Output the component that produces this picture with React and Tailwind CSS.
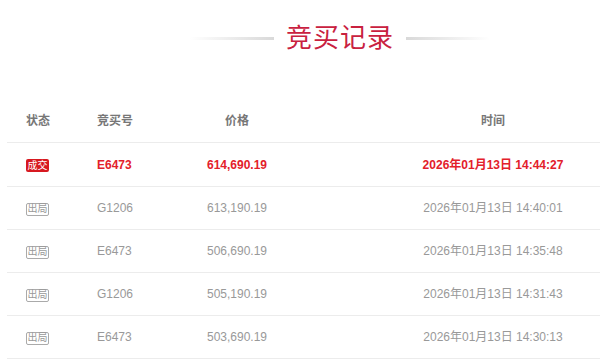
import React from "react";

const rows = [
  { status: "成交", code: "E6473", price: "614,690.19", time: "2026年01月13日 14:44:27", win: true },
  { status: "出局", code: "G1206", price: "613,190.19", time: "2026年01月13日 14:40:01" },
  { status: "出局", code: "E6473", price: "506,690.19", time: "2026年01月13日 14:35:48" },
  { status: "出局", code: "G1206", price: "505,190.19", time: "2026年01月13日 14:31:43" },
  { status: "出局", code: "E6473", price: "503,690.19", time: "2026年01月13日 14:30:13" },
];

const font = { fontFamily: '"Liberation Sans", Arial, "Noto Sans CJK SC", sans-serif' };

export default function App() {
  return (
    <div className="w-[600px] h-[359px] overflow-hidden bg-white" style={font}>
      <div className="flex items-center justify-center h-[76px] gap-3 pl-[80px]">
        <div className="w-[84px] h-[3px] bg-gradient-to-r from-white to-[#d9d9d9]" />
        <h1 className="text-[26px] leading-none text-[#c9213f] tracking-[1px]">竞买记录</h1>
        <div className="w-[84px] h-[3px] bg-gradient-to-r from-[#d9d9d9] to-white" />
      </div>

      <div className="ml-[7px] mt-[24px]">
        <div className="grid grid-cols-[83px_80px_134px_1fr] items-center h-[43px] border-b border-[#ececec] text-[12px] font-bold text-[#777]">
          <div className="pl-[19px]">状态</div>
          <div className="pl-[7px]">竞买号</div>
          <div className="text-center">价格</div>
          <div className="text-center pl-[82px]">时间</div>
        </div>
        {rows.map((r, i) => (
          <div
            key={i}
            className={
              "grid grid-cols-[83px_80px_134px_1fr] items-center border-b border-[#ececec] text-[12px] " +
              (i === 0 ? "h-[44px] " : "h-[43px] ") +
              (r.win ? "font-bold text-[#e3202a]" : "text-[#999]")
            }
          >
            <div className="pl-[19px]">
              {r.win ? (
                <span className="inline-flex items-center justify-center w-[23px] h-[13px] rounded-[2px] bg-[#d71920] text-white text-[10px] font-normal leading-none">
                  {r.status}
                </span>
              ) : (
                <span className="inline-flex items-center justify-center w-[23px] h-[13px] rounded-[2px] border border-[#aaa] text-[#999] text-[10px] leading-none">
                  {r.status}
                </span>
              )}
            </div>
            <div className="pl-[7px]">{r.code}</div>
            <div className="text-center">{r.price}</div>
            <div className="text-center pl-[82px]">{r.time}</div>
          </div>
        ))}
      </div>
    </div>
  );
}
